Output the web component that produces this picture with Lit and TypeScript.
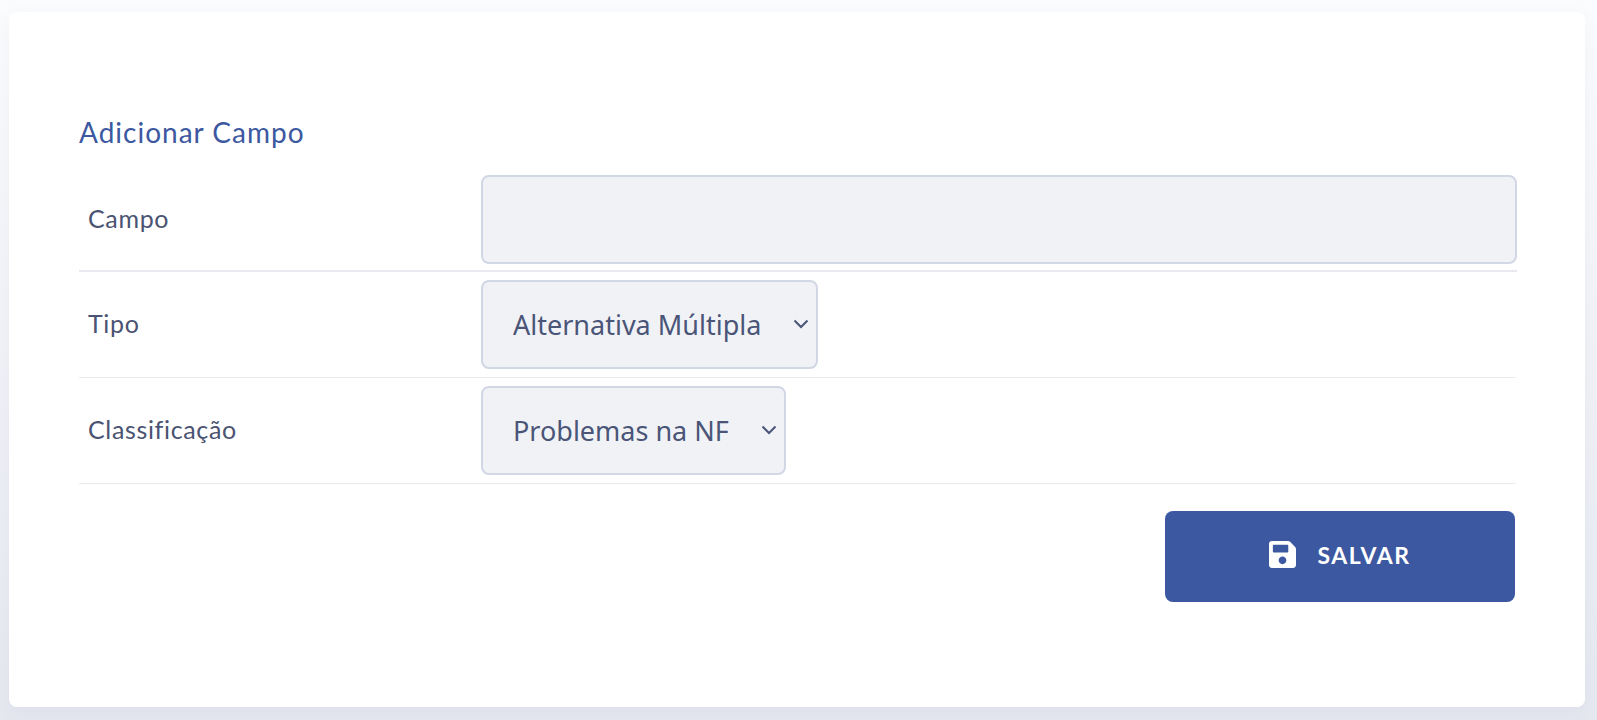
import { LitElement, html, css } from "lit";
import { customElement } from "lit/decorators.js";

@customElement("app-root")
export class AppRoot extends LitElement {
  static styles = css`
    :host {
      display: block;
      height: 720px;
      overflow: hidden;
      background: #fff;
      font-family: "Lato", "Noto Sans", sans-serif;
      box-sizing: border-box;
    }
    .page {
      height: 720px;
      box-sizing: border-box;
      padding: 12px 12px 13px 9px;
      background: linear-gradient(#fbfcfd, #f1f2f7 50%, #e6e8f0);
    }
    .card {
      height: 695px;
      box-sizing: border-box;
      background: #fff;
      border-radius: 8px;
      padding: 103px 69px 0 70px;
      box-shadow: 0 6px 20px rgba(60, 70, 120, 0.05);
      display: flex;
      flex-direction: column;
    }
    h2 {
      margin: 0;
      height: 35px;
      line-height: 35px;
      font-size: 28px;
      font-weight: 400;
      color: #3c58a0;
      letter-spacing: 1px;
    }
    .row {
      display: grid;
      grid-template-columns: 402px 1fr;
      align-items: center;
      border-bottom: 1px solid #e8eaf0;
      padding: 8px 0;
    }
    .row.first {
      border-bottom-width: 2px;
      padding: 0 0 6px;
      margin-top: 25px;
      margin-right: -1px;
    }
    .row label {
      padding: 0 0 4px 9px;
      font-size: 25px;
      letter-spacing: 0.65px;
      color: #4a5372;
    }
    .field {
      box-sizing: border-box;
      height: 89px;
      background: #f1f2f6;
      border: 2px solid #d2d7e5;
      border-radius: 8px;
    }
    input.field { width: 100%; display: block; outline: none; }
    .select {
      position: relative;
      display: inline-flex;
      justify-self: start;
    }
    select {
      appearance: none;
      -webkit-appearance: none;
      font-family: "Noto Sans", "Open Sans", sans-serif;
      font-size: 27px;
      color: #4a5578;
      padding: 0 0 0 30px;
      outline: none;
    }
    .w1 { width: 337px; }
    .w2 { width: 305px; }
    .chev {
      position: absolute;
      right: 9px;
      top: 39px;
      width: 16px;
      height: 10px;
      pointer-events: none;
    }
    .actions {
      display: flex;
      justify-content: flex-end;
      padding: 27px 1px 0 0;
    }
    button {
      width: 350px;
      height: 91px;
      border: 0;
      border-radius: 8px;
      background: #3c58a0;
      color: #fff;
      font-family: "Lato", "Noto Sans", sans-serif;
      font-weight: 700;
      font-size: 23px;
      letter-spacing: 1.6px;
      display: flex;
      align-items: center;
      justify-content: center;
      gap: 21px;
      padding: 0 0 4px;
    }
    button svg { width: 27px; height: 31px; }
  `;

  chevron() {
    return html`<svg class="chev" viewBox="0 0 16 10"><path d="M1.5 1.5 8 8l6.5-6.5" fill="none" stroke="#4a5578" stroke-width="2"/></svg>`;
  }

  render() {
    return html`
      <div class="page">
        <div class="card">
          <h2>Adicionar Campo</h2>
          <div class="row first">
            <label>Campo</label>
            <input class="field" type="text" />
          </div>
          <div class="row">
            <label>Tipo</label>
            <div class="select">
              <select class="field w1"><option>Alternativa Múltipla</option></select>
              ${this.chevron()}
            </div>
          </div>
          <div class="row">
            <label>Classificação</label>
            <div class="select">
              <select class="field w2"><option>Problemas na NF</option></select>
              ${this.chevron()}
            </div>
          </div>
          <div class="actions">
            <button>
              <svg viewBox="0 0 448 512"><path fill="#fff" d="M433.9 129.9l-83.9-83.9A48 48 0 0 0 316.1 32H48C21.5 32 0 53.5 0 80v352c0 26.5 21.5 48 48 48h352c26.5 0 48-21.5 48-48V163.9a48 48 0 0 0-14.1-34zM224 416c-35.3 0-64-28.7-64-64s28.7-64 64-64 64 28.7 64 64-28.7 64-64 64zm96-304.5V212c0 6.6-5.4 12-12 12H76c-6.6 0-12-5.4-12-12V108c0-6.6 5.4-12 12-12h228.5c3.2 0 6.2 1.3 8.5 3.5l3.5 3.5c2.3 2.3 3.5 5.3 3.5 8.5z"/></svg>
              <span>SALVAR</span>
            </button>
          </div>
        </div>
      </div>
    `;
  }
}
